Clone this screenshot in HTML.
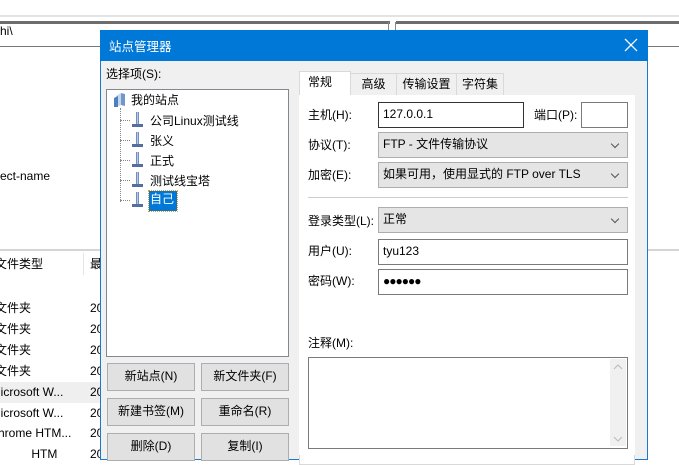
<!DOCTYPE html>
<html><head><meta charset="utf-8"><style>
*{box-sizing:border-box;margin:0;padding:0}
body{width:679px;height:454px;overflow:hidden;background:#fff;position:relative;font-family:"Liberation Sans","Noto Sans CJK SC","Microsoft YaHei",sans-serif;font-size:12px;color:#000}
.a{position:absolute;white-space:nowrap}
.btn{position:absolute;background:#e1e1e1;border:1px solid #adadad;text-align:center;line-height:24px;width:88px;height:28px}
.inp{position:absolute;background:#fff;border:1px solid #7a7a7a;height:26px;line-height:22px;padding-left:4px}
.cmb{position:absolute;background:#e5e5e5;border:1px solid #adadad;height:26px;line-height:22px;padding-left:4px;width:250px;left:378px}
.cmb:after{content:"";position:absolute;right:9px;top:8px;width:5px;height:5px;border-right:1px solid #555;border-bottom:1px solid #555;transform:rotate(45deg)}
.tab{position:absolute;top:73px;height:22px;border:1px solid #d9d9d9;border-bottom:none;background:#f0f0f0;text-align:center;line-height:20px}
</style></head><body>
<div class="a" style="left:0;top:15px;width:679px;height:2px;background:#e3e3e3"></div>
<div class="a" style="left:0;top:21px;width:390px;height:3px;background:#6d6d6d"></div>
<div class="a" style="left:396px;top:21px;width:283px;height:3px;background:#6d6d6d"></div>
<div class="a" style="left:395px;top:22px;width:1px;height:10px;background:#888"></div>
<div class="a" style="left:388px;top:22px;width:1px;height:10px;background:#888"></div>
<div class="a" style="left:0;top:24px">hi\</div>
<div class="a" style="left:0;top:46px;width:679px;height:1px;background:#777"></div>
<div class="a" style="left:0;top:169px">ect-name</div>
<div class="a" style="left:0;top:249px;width:679px;height:2px;background:#d5d5d5"></div>
<div class="a" style="left:83px;top:253px;width:1px;height:22px;background:#e5e5e5"></div>
<div class="a" style="left:-5px;top:255px">文件类型</div>
<div class="a" style="left:90px;top:255px">最</div>
<div class="a" style="left:0;top:382px;width:100px;height:21px;background:#efefef"></div>
<div class="a" style="left:-5px;top:298px;line-height:20.9px">文件夹<br>文件夹<br>文件夹<br>文件夹</div>
<div class="a" style="left:-2px;top:381.6px;line-height:20.9px">licrosoft W...<br>licrosoft W...<br>hrome HTM...<br>&nbsp;&nbsp;&nbsp;&nbsp;&nbsp;&nbsp;&nbsp;&nbsp;&nbsp;&nbsp;HTM</div>
<div class="a" style="left:90px;top:298px;line-height:20.9px">20<br>20<br>20<br>20<br>20<br>20<br>20<br>20</div>

<div class="a" style="left:100px;top:30px;width:548px;height:430px;background:#f0f0f0;border:1px solid #1a78d2;border-top:none"></div>
<div class="a" style="left:100px;top:30px;width:548px;height:31px;background:#0078d7"></div>
<div class="a" style="left:109px;top:36px;color:#fff;font-size:12.5px">站点管理器</div>
<svg class="a" style="left:624px;top:38px" width="14" height="14"><path d="M1 1L13 13M13 1L1 13" stroke="#fff" stroke-width="1.3"/></svg>

<div class="a" style="left:106px;top:65px">选择项(S):</div>
<div class="a" style="left:106px;top:89px;width:183px;height:268px;background:#fff;border:1px solid #828790"></div>
<svg class="a" style="left:113px;top:92px" width="14" height="16"><path d="M3 4L8 1V13L3 15Z" fill="#c8d6ea"/><path d="M8 1L12 2V14L8 13Z" fill="#6f97cc"/><path d="M1 6L5 4V15L1 15Z" fill="#4d7fc1"/></svg>
<div class="a" style="left:131px;top:91px">我的站点</div>
<div class="a" style="left:120px;top:108px;height:94px;border-left:1px dotted #888"></div>
<div class="a" style="left:120px;top:120px">
<div style="position:relative;width:14px;height:100px">
<div style="position:absolute;top:0;left:0;width:10px;border-top:1px dotted #888"></div>
<div style="position:absolute;top:20px;left:0;width:10px;border-top:1px dotted #888"></div>
<div style="position:absolute;top:40px;left:0;width:10px;border-top:1px dotted #888"></div>
<div style="position:absolute;top:60px;left:0;width:10px;border-top:1px dotted #888"></div>
<div style="position:absolute;top:80px;left:0;width:10px;border-top:1px dotted #888"></div>
</div></div>
<svg class="a" style="left:131px;top:112px" width="14" height="100">
<g id="m"><rect x="5" y="0" width="3" height="12" fill="#6f8fc0"/><rect x="6" y="0" width="1" height="12" fill="#b9c9e3"/><rect x="1" y="12" width="11" height="3" fill="#536f9e"/></g>
<use href="#m" y="20"/><use href="#m" y="40"/><use href="#m" y="60"/><use href="#m" y="80"/></svg>
<div class="a" style="left:150px;top:111px;line-height:20px">公司Linux测试线<br>张义<br>正式<br>测试线宝塔</div>
<div class="a" style="left:149px;top:191px;width:28px;height:20px;background:#0078d7;outline:1px dotted #f90;color:#fff;line-height:17px;padding-left:1px">自己</div>

<div class="btn" style="left:107px;top:363px">新站点(N)</div>
<div class="btn" style="left:201px;top:363px">新文件夹(F)</div>
<div class="btn" style="left:107px;top:398px">新建书签(M)</div>
<div class="btn" style="left:201px;top:398px">重命名(R)</div>
<div class="btn" style="left:107px;top:433px">删除(D)</div>
<div class="btn" style="left:201px;top:433px">复制(I)</div>

<div class="a" style="left:299px;top:95px;width:336px;height:370px;background:#fff;border:1px solid #d9d9d9"></div>
<div class="tab" style="left:350px;width:47px">高级</div>
<div class="tab" style="left:396px;width:61px">传输设置</div>
<div class="tab" style="left:456px;width:48px">字符集</div>
<div class="tab" style="left:299px;top:71px;width:52px;height:26px;background:#fff;text-align:left;padding-left:8px">常规</div>
<div class="a" style="left:299px;top:95px;width:336px;height:360px;background:#fff"></div>

<div class="a" style="left:308px;top:106px">主机(H):</div>
<div class="inp" style="left:378px;top:102px;width:146px;border-color:#333">127.0.0.1</div>
<div class="a" style="left:534px;top:106px">端口(P):</div>
<div class="inp" style="left:581px;top:102px;width:47px"></div>
<div class="a" style="left:308px;top:136px">协议(T):</div>
<div class="cmb" style="top:132px">FTP - 文件传输协议</div>
<div class="a" style="left:308px;top:166px">加密(E):</div>
<div class="cmb" style="top:162px">如果可用，使用显式的 FTP over TLS</div>
<div class="a" style="left:308px;top:197px;width:320px;height:1px;background:#ccc"></div>
<div class="a" style="left:308px;top:212px">登录类型(L):</div>
<div class="cmb" style="top:207px">正常</div>
<div class="a" style="left:308px;top:242px">用户(U):</div>
<div class="inp" style="left:378px;top:239px;width:250px">tyu123</div>
<div class="a" style="left:308px;top:272px">密码(W):</div>
<div class="inp" style="left:378px;top:269px;width:250px;letter-spacing:-1px">●●●●●●</div>
<div class="a" style="left:308px;top:334px">注释(M):</div>
<div class="inp" style="left:308px;top:357px;width:320px;height:92px"></div>
<div class="a" style="left:610px;top:359px;width:16px;height:87px;background:#f0f0f0"></div>
<svg class="a" style="left:613px;top:364px" width="10" height="80"><path d="M1 5L5 1L9 5" stroke="#bbb" fill="none"/><path d="M1 73L5 77L9 73" stroke="#bbb" fill="none"/></svg>
</body></html>
